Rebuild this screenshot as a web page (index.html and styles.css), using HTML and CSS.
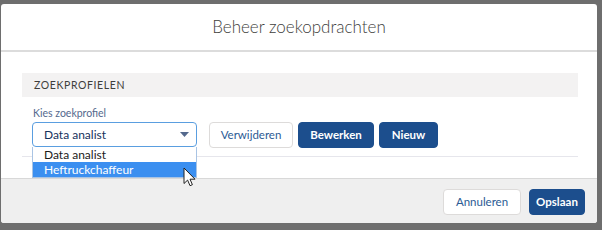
FILE: index.html
```html
<!DOCTYPE html>
<html lang="nl">
<head>
<meta charset="utf-8">
<title>Beheer zoekopdrachten</title>
<link rel="stylesheet" href="styles.css">
</head>
<body>
<div class="modal">
  <header class="modal-header">
    <h2 class="modal-title">Beheer zoekopdrachten</h2>
  </header>
  <div class="modal-body">
    <div class="section-bar"><span class="section-title">Zoekprofielen</span></div>
    <div class="content">
      <label class="field-label">Kies zoekprofiel</label>
      <div class="row">
        <div class="select-wrap">
          <div class="select">
            <span class="select-value">Data analist</span>
            <svg class="caret" width="9" height="5" viewBox="0 0 9 5"><path d="M0 0h9L4.5 5z" fill="#54698d"/></svg>
          </div>
          <ul class="options">
            <li class="option">Data analist</li>
            <li class="option active">Heftruckchaffeur</li>
          </ul>
          <svg class="cursor" width="13" height="20" viewBox="0 0 13 20"><path d="M1 1v15.5l3.6-3.4 2.4 5.6 2.4-1-2.4-5.5h5z" fill="#fff" stroke="#222" stroke-width="1" stroke-linejoin="round"/></svg>
        </div>
        <button class="btn btn-neutral btn-remove">Verwijderen</button>
        <button class="btn btn-brand btn-edit">Bewerken</button>
        <button class="btn btn-brand btn-new">Nieuw</button>
      </div>
    </div>
    <div class="divider"></div>
  </div>
  <footer class="modal-footer">
    <button class="btn btn-neutral btn-cancel">Annuleren</button>
    <button class="btn btn-brand btn-save">Opslaan</button>
  </footer>
</div>
</body>
</html>
```

FILE: styles.css
```css
* { box-sizing: border-box; }
html, body { margin: 0; padding: 0; }
body {
  width: 602px;
  height: 230px;
  background: #6e6e6e;
  padding: 4px 5px 7px 1px;
  font-family: "Lato", "Open Sans", "Liberation Sans", sans-serif;
  color: #16325c;
  overflow: hidden;
}
.modal {
  width: 596px;
  height: 219px;
  background: #fff;
  border-radius: 3px;
  display: flex;
  flex-direction: column;
}
.modal-header {
  height: 48px;
  border-bottom: 2px solid #dcdcdc;
  display: flex;
  align-items: center;
  justify-content: center;
}
.modal-title {
  margin: 0;
  font-family: "Lato", "Open Sans", sans-serif;
  font-weight: 300;
  font-size: 17px;
  color: #3e3e3c;
  padding-bottom: 1px;
}
.modal-body {
  height: 126px;
  padding: 21px 19px 0 21px;
}
.section-bar {
  height: 24px;
  background: #f3f2f2;
  display: flex;
  align-items: center;
  padding-left: 12px;
}
.section-title {
  text-transform: uppercase;
  font-size: 10.5px;
  letter-spacing: 0.6px;
  color: #3e3e3c;
}
.content {
  padding: 11px 10px 0 10px;
}
.field-label {
  display: block;
  font-size: 10.5px;
  color: #54698d;
  height: 10px;
  line-height: 10px;
  margin: 0 0 4px 1px;
}
.row {
  display: flex;
  align-items: center;
  height: 25px;
}
.select-wrap {
  position: relative;
  width: 165px;
  height: 25px;
}
.select {
  height: 25px;
  border: 1px solid #5a9ee0;
  border-radius: 4px;
  display: flex;
  align-items: center;
  padding: 0 7px 0 11px;
  justify-content: space-between;
}
.select-value {
  font-size: 12px;
  color: #16325c;
}
.caret { display: block; }
.options {
  position: absolute;
  left: 0;
  top: 25px;
  width: 165px;
  margin: 0;
  padding: 0;
  list-style: none;
  background: #fff;
  border: 1px solid #a9c4e4;
  border-top: 0;
}
.option {
  height: 15px;
  line-height: 15px;
  font-size: 12px;
  color: #1b1b1b;
  padding-left: 11px;
}
.option.active {
  background: #3b8ff0;
  color: #fff;
}
.cursor {
  position: absolute;
  left: 151px;
  top: 45px;
}
.btn {
  height: 26px;
  border-radius: 4px;
  font-family: "Lato", "Open Sans", "Liberation Sans", sans-serif;
  font-size: 11.5px;
  padding: 0;
  cursor: pointer;
}
.btn-neutral {
  background: #fff;
  border: 1px solid #dddbda;
  color: #2b5a94;
}
.btn-brand {
  background: #1c4e8d;
  border: 1px solid #1c4e8d;
  color: #fff;
  font-weight: 700;
}
.btn-remove { width: 84px; margin-left: 12px; }
.btn-edit { width: 76px; margin-left: 5px; }
.btn-new { width: 59px; margin-left: 5px; }
.divider {
  height: 1px;
  background: #e6e6ec;
  margin-top: 9px;
}
.modal-footer {
  flex: 1;
  background: #efefef;
  border-top: 1px solid #d8d8d8;
  border-radius: 0 0 3px 3px;
  display: flex;
  justify-content: flex-end;
  align-items: center;
  padding-right: 12px;
  padding-top: 1px;
}
.btn-cancel { width: 78px; }
.btn-save { width: 56px; margin-left: 8px; }
```
